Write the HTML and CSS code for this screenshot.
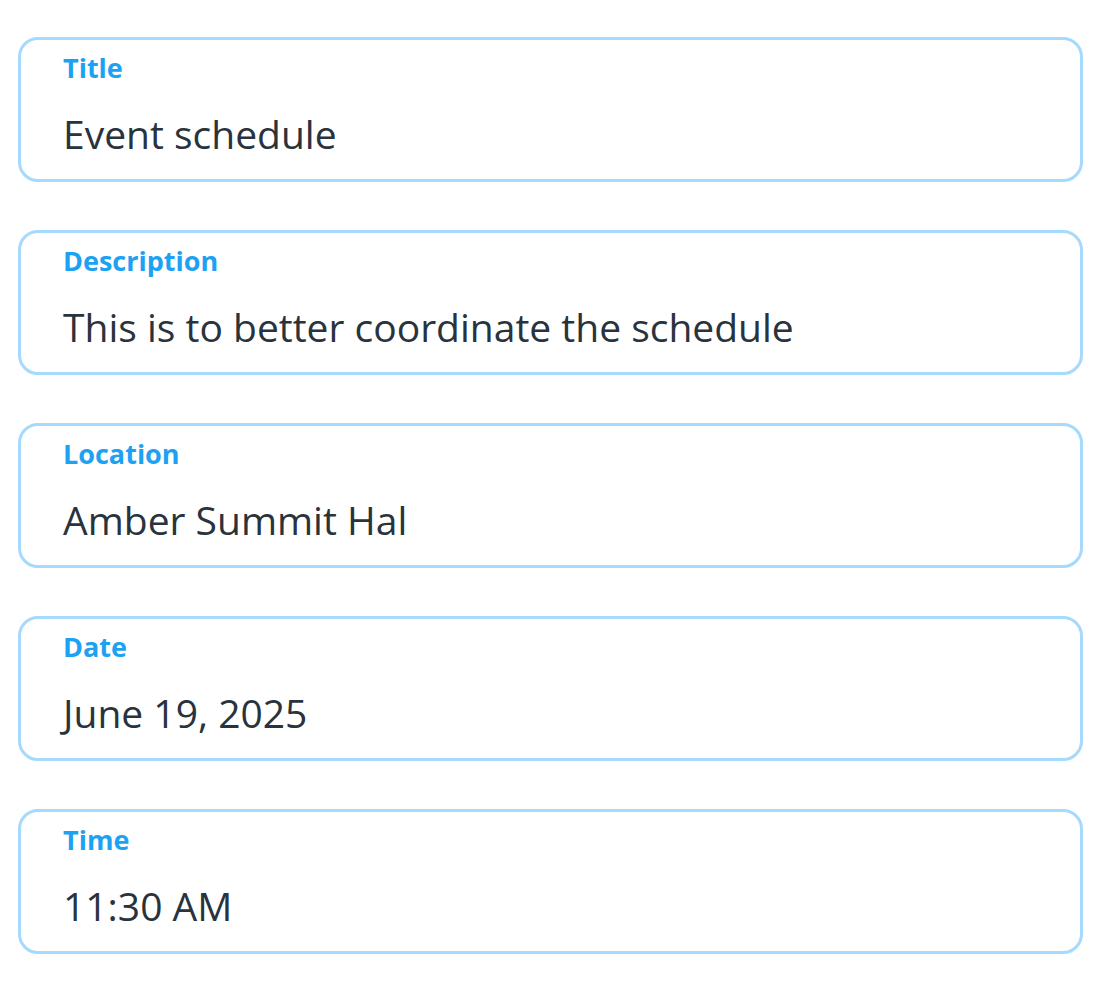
FILE: index.html
```html
<!DOCTYPE html>
<html lang="en">
<head>
  <meta charset="UTF-8" />
  <meta name="viewport" content="width=device-width, initial-scale=1.0"/>
  <title>Event details</title>
  <link rel="stylesheet" href="styles.css">
</head>
<body>

  <!-- Event fields -->
  <div class="form">
    <div class="field">
      <div class="label">Title</div>
      <div class="value">Event schedule</div>
    </div>
    <div class="field">
      <div class="label">Description</div>
      <div class="value">This is to better coordinate the schedule</div>
    </div>
    <div class="field">
      <div class="label">Location</div>
      <div class="value">Amber Summit Hal</div>
    </div>
    <div class="field">
      <div class="label">Date</div>
      <div class="value">June 19, 2025</div>
    </div>
    <div class="field">
      <div class="label">Time</div>
      <div class="value">11:30 AM</div>
    </div>
  </div>

</body>
</html>
```

FILE: styles.css
```css
* {
  margin: 0;
  padding: 0;
  box-sizing: border-box;
}

body {
  font-family: "Open Sans", "Noto Sans", sans-serif;
  background: white;
  color: #29333d;
}

.form {
  display: flex;
  flex-direction: column;
  gap: 48px;
  padding: 37px 32px 0 18px;
}

.field {
  border: 3px solid #a6dafc;
  border-radius: 20px;
  height: 145px;
  padding: 9px 40px 0 42px;
}

.label {
  font-size: 27px;
  font-weight: 700;
  line-height: 37px;
  color: #1da1f2;
  margin-bottom: 21px;
}

.value {
  font-size: 39px;
  line-height: 53px;
}
```
